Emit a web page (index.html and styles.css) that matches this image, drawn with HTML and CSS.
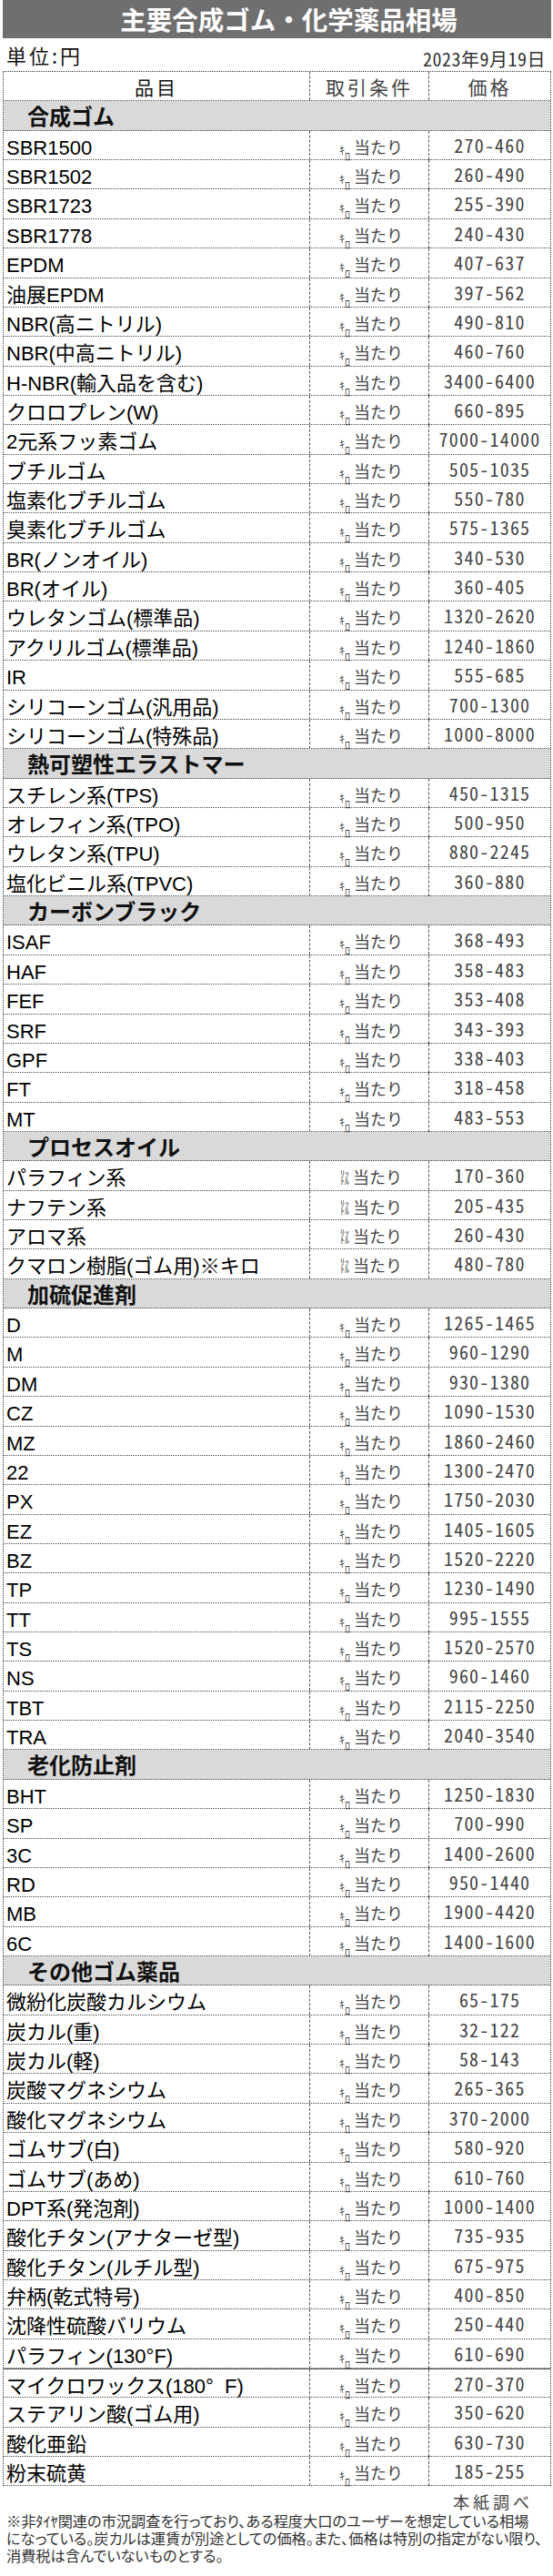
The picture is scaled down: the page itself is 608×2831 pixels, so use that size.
FILE: index.html
```html
<!DOCTYPE html>
<html lang="ja">
<head>
<meta charset="utf-8">
<title>主要合成ゴム・化学薬品相場</title>
<link rel="stylesheet" href="styles.css">
</head>
<body>
<div class="page">
  <div class="title">主要合成ゴム・化学薬品相場</div>
  <div class="meta">
    <span class="unit">単位:円</span>
    <span class="date">2023年9月19日</span>
  </div>
  <div class="table">
    <div class="row head"><div class="c1">品目</div><div class="c2">取引条件</div><div class="c3">価格</div></div>

    <div class="row sec"><div class="sname">合成ゴム</div></div>
    <div class="row"><div class="c1">SBR1500</div><div class="c2"><span class="kg"><span class="a">ｷ</span><span class="b">ﾛ</span></span>当たり</div><div class="c3">270-460</div></div>
    <div class="row"><div class="c1">SBR1502</div><div class="c2"><span class="kg"><span class="a">ｷ</span><span class="b">ﾛ</span></span>当たり</div><div class="c3">260-490</div></div>
    <div class="row"><div class="c1">SBR1723</div><div class="c2"><span class="kg"><span class="a">ｷ</span><span class="b">ﾛ</span></span>当たり</div><div class="c3">255-390</div></div>
    <div class="row"><div class="c1">SBR1778</div><div class="c2"><span class="kg"><span class="a">ｷ</span><span class="b">ﾛ</span></span>当たり</div><div class="c3">240-430</div></div>
    <div class="row"><div class="c1">EPDM</div><div class="c2"><span class="kg"><span class="a">ｷ</span><span class="b">ﾛ</span></span>当たり</div><div class="c3">407-637</div></div>
    <div class="row"><div class="c1">油展EPDM</div><div class="c2"><span class="kg"><span class="a">ｷ</span><span class="b">ﾛ</span></span>当たり</div><div class="c3">397-562</div></div>
    <div class="row"><div class="c1">NBR(高ニトリル)</div><div class="c2"><span class="kg"><span class="a">ｷ</span><span class="b">ﾛ</span></span>当たり</div><div class="c3">490-810</div></div>
    <div class="row"><div class="c1">NBR(中高ニトリル)</div><div class="c2"><span class="kg"><span class="a">ｷ</span><span class="b">ﾛ</span></span>当たり</div><div class="c3">460-760</div></div>
    <div class="row"><div class="c1">H-NBR(輸入品を含む)</div><div class="c2"><span class="kg"><span class="a">ｷ</span><span class="b">ﾛ</span></span>当たり</div><div class="c3">3400-6400</div></div>
    <div class="row"><div class="c1">クロロプレン(W)</div><div class="c2"><span class="kg"><span class="a">ｷ</span><span class="b">ﾛ</span></span>当たり</div><div class="c3">660-895</div></div>
    <div class="row"><div class="c1">2元系フッ素ゴム</div><div class="c2"><span class="kg"><span class="a">ｷ</span><span class="b">ﾛ</span></span>当たり</div><div class="c3">7000-14000</div></div>
    <div class="row"><div class="c1">ブチルゴム</div><div class="c2"><span class="kg"><span class="a">ｷ</span><span class="b">ﾛ</span></span>当たり</div><div class="c3">505-1035</div></div>
    <div class="row"><div class="c1">塩素化ブチルゴム</div><div class="c2"><span class="kg"><span class="a">ｷ</span><span class="b">ﾛ</span></span>当たり</div><div class="c3">550-780</div></div>
    <div class="row"><div class="c1">臭素化ブチルゴム</div><div class="c2"><span class="kg"><span class="a">ｷ</span><span class="b">ﾛ</span></span>当たり</div><div class="c3">575-1365</div></div>
    <div class="row"><div class="c1">BR(ノンオイル)</div><div class="c2"><span class="kg"><span class="a">ｷ</span><span class="b">ﾛ</span></span>当たり</div><div class="c3">340-530</div></div>
    <div class="row"><div class="c1">BR(オイル)</div><div class="c2"><span class="kg"><span class="a">ｷ</span><span class="b">ﾛ</span></span>当たり</div><div class="c3">360-405</div></div>
    <div class="row"><div class="c1">ウレタンゴム(標準品)</div><div class="c2"><span class="kg"><span class="a">ｷ</span><span class="b">ﾛ</span></span>当たり</div><div class="c3">1320-2620</div></div>
    <div class="row"><div class="c1">アクリルゴム(標準品)</div><div class="c2"><span class="kg"><span class="a">ｷ</span><span class="b">ﾛ</span></span>当たり</div><div class="c3">1240-1860</div></div>
    <div class="row"><div class="c1">IR</div><div class="c2"><span class="kg"><span class="a">ｷ</span><span class="b">ﾛ</span></span>当たり</div><div class="c3">555-685</div></div>
    <div class="row"><div class="c1">シリコーンゴム(汎用品)</div><div class="c2"><span class="kg"><span class="a">ｷ</span><span class="b">ﾛ</span></span>当たり</div><div class="c3">700-1300</div></div>
    <div class="row"><div class="c1">シリコーンゴム(特殊品)</div><div class="c2"><span class="kg"><span class="a">ｷ</span><span class="b">ﾛ</span></span>当たり</div><div class="c3">1000-8000</div></div>

    <div class="row sec"><div class="sname">熱可塑性エラストマー</div></div>
    <div class="row"><div class="c1">スチレン系(TPS)</div><div class="c2"><span class="kg"><span class="a">ｷ</span><span class="b">ﾛ</span></span>当たり</div><div class="c3">450-1315</div></div>
    <div class="row"><div class="c1">オレフィン系(TPO)</div><div class="c2"><span class="kg"><span class="a">ｷ</span><span class="b">ﾛ</span></span>当たり</div><div class="c3">500-950</div></div>
    <div class="row"><div class="c1">ウレタン系(TPU)</div><div class="c2"><span class="kg"><span class="a">ｷ</span><span class="b">ﾛ</span></span>当たり</div><div class="c3">880-2245</div></div>
    <div class="row"><div class="c1">塩化ビニル系(TPVC)</div><div class="c2"><span class="kg"><span class="a">ｷ</span><span class="b">ﾛ</span></span>当たり</div><div class="c3">360-880</div></div>

    <div class="row sec"><div class="sname">カーボンブラック</div></div>
    <div class="row"><div class="c1">ISAF</div><div class="c2"><span class="kg"><span class="a">ｷ</span><span class="b">ﾛ</span></span>当たり</div><div class="c3">368-493</div></div>
    <div class="row"><div class="c1">HAF</div><div class="c2"><span class="kg"><span class="a">ｷ</span><span class="b">ﾛ</span></span>当たり</div><div class="c3">358-483</div></div>
    <div class="row"><div class="c1">FEF</div><div class="c2"><span class="kg"><span class="a">ｷ</span><span class="b">ﾛ</span></span>当たり</div><div class="c3">353-408</div></div>
    <div class="row"><div class="c1">SRF</div><div class="c2"><span class="kg"><span class="a">ｷ</span><span class="b">ﾛ</span></span>当たり</div><div class="c3">343-393</div></div>
    <div class="row"><div class="c1">GPF</div><div class="c2"><span class="kg"><span class="a">ｷ</span><span class="b">ﾛ</span></span>当たり</div><div class="c3">338-403</div></div>
    <div class="row"><div class="c1">FT</div><div class="c2"><span class="kg"><span class="a">ｷ</span><span class="b">ﾛ</span></span>当たり</div><div class="c3">318-458</div></div>
    <div class="row"><div class="c1">MT</div><div class="c2"><span class="kg"><span class="a">ｷ</span><span class="b">ﾛ</span></span>当たり</div><div class="c3">483-553</div></div>

    <div class="row sec"><div class="sname">プロセスオイル</div></div>
    <div class="row"><div class="c1">パラフィン系</div><div class="c2"><span class="lt">ﾘｯﾄﾙ</span>当たり</div><div class="c3">170-360</div></div>
    <div class="row"><div class="c1">ナフテン系</div><div class="c2"><span class="lt">ﾘｯﾄﾙ</span>当たり</div><div class="c3">205-435</div></div>
    <div class="row"><div class="c1">アロマ系</div><div class="c2"><span class="lt">ﾘｯﾄﾙ</span>当たり</div><div class="c3">260-430</div></div>
    <div class="row"><div class="c1">クマロン樹脂(ゴム用)※キロ</div><div class="c2"><span class="lt">ﾘｯﾄﾙ</span>当たり</div><div class="c3">480-780</div></div>

    <div class="row sec"><div class="sname">加硫促進剤</div></div>
    <div class="row"><div class="c1">D</div><div class="c2"><span class="kg"><span class="a">ｷ</span><span class="b">ﾛ</span></span>当たり</div><div class="c3">1265-1465</div></div>
    <div class="row"><div class="c1">M</div><div class="c2"><span class="kg"><span class="a">ｷ</span><span class="b">ﾛ</span></span>当たり</div><div class="c3">960-1290</div></div>
    <div class="row"><div class="c1">DM</div><div class="c2"><span class="kg"><span class="a">ｷ</span><span class="b">ﾛ</span></span>当たり</div><div class="c3">930-1380</div></div>
    <div class="row"><div class="c1">CZ</div><div class="c2"><span class="kg"><span class="a">ｷ</span><span class="b">ﾛ</span></span>当たり</div><div class="c3">1090-1530</div></div>
    <div class="row"><div class="c1">MZ</div><div class="c2"><span class="kg"><span class="a">ｷ</span><span class="b">ﾛ</span></span>当たり</div><div class="c3">1860-2460</div></div>
    <div class="row"><div class="c1">22</div><div class="c2"><span class="kg"><span class="a">ｷ</span><span class="b">ﾛ</span></span>当たり</div><div class="c3">1300-2470</div></div>
    <div class="row"><div class="c1">PX</div><div class="c2"><span class="kg"><span class="a">ｷ</span><span class="b">ﾛ</span></span>当たり</div><div class="c3">1750-2030</div></div>
    <div class="row"><div class="c1">EZ</div><div class="c2"><span class="kg"><span class="a">ｷ</span><span class="b">ﾛ</span></span>当たり</div><div class="c3">1405-1605</div></div>
    <div class="row"><div class="c1">BZ</div><div class="c2"><span class="kg"><span class="a">ｷ</span><span class="b">ﾛ</span></span>当たり</div><div class="c3">1520-2220</div></div>
    <div class="row"><div class="c1">TP</div><div class="c2"><span class="kg"><span class="a">ｷ</span><span class="b">ﾛ</span></span>当たり</div><div class="c3">1230-1490</div></div>
    <div class="row"><div class="c1">TT</div><div class="c2"><span class="kg"><span class="a">ｷ</span><span class="b">ﾛ</span></span>当たり</div><div class="c3">995-1555</div></div>
    <div class="row"><div class="c1">TS</div><div class="c2"><span class="kg"><span class="a">ｷ</span><span class="b">ﾛ</span></span>当たり</div><div class="c3">1520-2570</div></div>
    <div class="row"><div class="c1">NS</div><div class="c2"><span class="kg"><span class="a">ｷ</span><span class="b">ﾛ</span></span>当たり</div><div class="c3">960-1460</div></div>
    <div class="row"><div class="c1">TBT</div><div class="c2"><span class="kg"><span class="a">ｷ</span><span class="b">ﾛ</span></span>当たり</div><div class="c3">2115-2250</div></div>
    <div class="row"><div class="c1">TRA</div><div class="c2"><span class="kg"><span class="a">ｷ</span><span class="b">ﾛ</span></span>当たり</div><div class="c3">2040-3540</div></div>

    <div class="row sec"><div class="sname">老化防止剤</div></div>
    <div class="row"><div class="c1">BHT</div><div class="c2"><span class="kg"><span class="a">ｷ</span><span class="b">ﾛ</span></span>当たり</div><div class="c3">1250-1830</div></div>
    <div class="row"><div class="c1">SP</div><div class="c2"><span class="kg"><span class="a">ｷ</span><span class="b">ﾛ</span></span>当たり</div><div class="c3">700-990</div></div>
    <div class="row"><div class="c1">3C</div><div class="c2"><span class="kg"><span class="a">ｷ</span><span class="b">ﾛ</span></span>当たり</div><div class="c3">1400-2600</div></div>
    <div class="row"><div class="c1">RD</div><div class="c2"><span class="kg"><span class="a">ｷ</span><span class="b">ﾛ</span></span>当たり</div><div class="c3">950-1440</div></div>
    <div class="row"><div class="c1">MB</div><div class="c2"><span class="kg"><span class="a">ｷ</span><span class="b">ﾛ</span></span>当たり</div><div class="c3">1900-4420</div></div>
    <div class="row"><div class="c1">6C</div><div class="c2"><span class="kg"><span class="a">ｷ</span><span class="b">ﾛ</span></span>当たり</div><div class="c3">1400-1600</div></div>

    <div class="row sec"><div class="sname">その他ゴム薬品</div></div>
    <div class="row"><div class="c1">微紛化炭酸カルシウム</div><div class="c2"><span class="kg"><span class="a">ｷ</span><span class="b">ﾛ</span></span>当たり</div><div class="c3">65-175</div></div>
    <div class="row"><div class="c1">炭カル(重)</div><div class="c2"><span class="kg"><span class="a">ｷ</span><span class="b">ﾛ</span></span>当たり</div><div class="c3">32-122</div></div>
    <div class="row"><div class="c1">炭カル(軽)</div><div class="c2"><span class="kg"><span class="a">ｷ</span><span class="b">ﾛ</span></span>当たり</div><div class="c3">58-143</div></div>
    <div class="row"><div class="c1">炭酸マグネシウム</div><div class="c2"><span class="kg"><span class="a">ｷ</span><span class="b">ﾛ</span></span>当たり</div><div class="c3">265-365</div></div>
    <div class="row"><div class="c1">酸化マグネシウム</div><div class="c2"><span class="kg"><span class="a">ｷ</span><span class="b">ﾛ</span></span>当たり</div><div class="c3">370-2000</div></div>
    <div class="row"><div class="c1">ゴムサブ(白)</div><div class="c2"><span class="kg"><span class="a">ｷ</span><span class="b">ﾛ</span></span>当たり</div><div class="c3">580-920</div></div>
    <div class="row"><div class="c1">ゴムサブ(あめ)</div><div class="c2"><span class="kg"><span class="a">ｷ</span><span class="b">ﾛ</span></span>当たり</div><div class="c3">610-760</div></div>
    <div class="row"><div class="c1">DPT系(発泡剤)</div><div class="c2"><span class="kg"><span class="a">ｷ</span><span class="b">ﾛ</span></span>当たり</div><div class="c3">1000-1400</div></div>
    <div class="row"><div class="c1">酸化チタン(アナターゼ型)</div><div class="c2"><span class="kg"><span class="a">ｷ</span><span class="b">ﾛ</span></span>当たり</div><div class="c3">735-935</div></div>
    <div class="row"><div class="c1">酸化チタン(ルチル型)</div><div class="c2"><span class="kg"><span class="a">ｷ</span><span class="b">ﾛ</span></span>当たり</div><div class="c3">675-975</div></div>
    <div class="row"><div class="c1">弁柄(乾式特号)</div><div class="c2"><span class="kg"><span class="a">ｷ</span><span class="b">ﾛ</span></span>当たり</div><div class="c3">400-850</div></div>
    <div class="row"><div class="c1">沈降性硫酸バリウム</div><div class="c2"><span class="kg"><span class="a">ｷ</span><span class="b">ﾛ</span></span>当たり</div><div class="c3">250-440</div></div>
    <div class="row"><div class="c1">パラフィン(130°F)</div><div class="c2"><span class="kg"><span class="a">ｷ</span><span class="b">ﾛ</span></span>当たり</div><div class="c3">610-690</div></div>
    <div class="row solid"><div class="c1">マイクロワックス(180°&nbsp;&nbsp;F)</div><div class="c2"><span class="kg"><span class="a">ｷ</span><span class="b">ﾛ</span></span>当たり</div><div class="c3">270-370</div></div>
    <div class="row"><div class="c1">ステアリン酸(ゴム用)</div><div class="c2"><span class="kg"><span class="a">ｷ</span><span class="b">ﾛ</span></span>当たり</div><div class="c3">350-620</div></div>
    <div class="row"><div class="c1">酸化亜鉛</div><div class="c2"><span class="kg"><span class="a">ｷ</span><span class="b">ﾛ</span></span>当たり</div><div class="c3">630-730</div></div>
    <div class="row"><div class="c1">粉末硫黄</div><div class="c2"><span class="kg"><span class="a">ｷ</span><span class="b">ﾛ</span></span>当たり</div><div class="c3">185-255</div></div>
  </div>
  <div class="source">本紙調べ</div>
  <p class="notes">※非ﾀｲﾔ関連の市況調査を行っており、ある程度大口のユーザーを想定している相場<br>になっている。炭カルは運賃が別途としての価格。また、価格は特別の指定がない限り、<br>消費税は含んでいないものとする。</p>
</div>
</body>
</html>
```

FILE: styles.css
```css
html, body {
  margin: 0;
  padding: 0;
  background: #ffffff;
}

.page {
  width: 603px;
  margin-left: 3px;
  font-family: "Noto Sans CJK JP", sans-serif;
  color: #000;
}

.title {
  height: 42px;
  box-sizing: border-box;
  padding-left: 26px;
  background: #6f6f6f;
  color: #ffffff;
  font-weight: 700;
  font-size: 28.5px;
  line-height: 42px;
  text-align: center;
  white-space: nowrap;
}

.meta {
  height: 36px;
  display: flex;
  justify-content: space-between;
  align-items: flex-start;
}

.unit {
  margin-top: 7px;
  margin-left: 4px;
  font-size: 22px;
  line-height: 22px;
  letter-spacing: 3px;
  color: #111;
}

.date {
  margin-top: 13px;
  margin-right: 6px;
  font-size: 20px;
  line-height: 20px;
  color: #333;
  letter-spacing: 0.5px;
  font-feature-settings: "hwid" 1;
}

.table {
  border-top: 1px dotted #333;
  border-left: 1px dotted #333;
  border-right: 1px dotted #333;
}

.row {
  display: grid;
  grid-template-columns: 336px 131px 1fr;
  height: 32.37px;
  box-sizing: border-box;
  border-bottom: 1px dotted #444;
}

.row.solid {
  border-top: 1px solid #555;
}

.c1 {
  padding-left: 3px;
  padding-top: 7px;
  font-family: "Liberation Sans", "Noto Sans CJK JP", sans-serif;
  font-size: 22px;
  line-height: 24px;
  color: #000;
  white-space: nowrap;
}

.c2 {
  border-left: 1px dashed #555;
  text-align: center;
  padding-top: 8px;
  padding-left: 4px;
  font-size: 18px;
  line-height: 18px;
  color: #444;
  white-space: nowrap;
}

.c3 {
  border-left: 1px dashed #555;
  text-align: center;
  padding-top: 6px;
  font-size: 20px;
  line-height: 20px;
  letter-spacing: 1.2px;
  color: #444;
  font-feature-settings: "hwid" 1;
  white-space: nowrap;
}

.head .c1 {
  font-family: "Noto Sans CJK JP", sans-serif;
  text-align: center;
  padding-left: 0;
  padding-top: 6px;
  font-size: 21px;
  line-height: 21px;
  letter-spacing: 3px;
  color: #111;
}

.head .c2,
.head .c3 {
  padding-top: 6px;
  padding-left: 0;
  font-size: 21px;
  line-height: 21px;
  letter-spacing: 3px;
}

.sec {
  display: block;
  background: #d9d9d9;
}

.sname {
  padding-left: 26px;
  padding-top: 4px;
  font-size: 24px;
  line-height: 24px;
  font-weight: 700;
  color: #111;
}

.kg {
  display: inline-flex;
  height: 16px;
  margin-right: 4px;
  font-size: 12px;
  line-height: 9px;
  vertical-align: -1px;
}

.kg .a {
  align-self: flex-start;
}

.kg .b {
  align-self: flex-end;
}

.lt {
  display: inline-block;
  width: 10px;
  margin-right: 4px;
  font-size: 10px;
  line-height: 8px;
  white-space: normal;
  word-break: break-all;
  text-align: left;
  vertical-align: -1px;
}

.source {
  margin-top: 8px;
  padding-right: 20px;
  text-align: right;
  font-size: 18px;
  line-height: 18px;
  letter-spacing: 4px;
  color: #444;
}

.notes {
  margin: 4px 0 0 0;
  padding-left: 4px;
  font-family: "Liberation Sans", "Noto Sans CJK JP", sans-serif;
  font-size: 16.2px;
  line-height: 18.8px;
  color: #333;
  white-space: nowrap;
  font-feature-settings: "palt" 1;
}
```
